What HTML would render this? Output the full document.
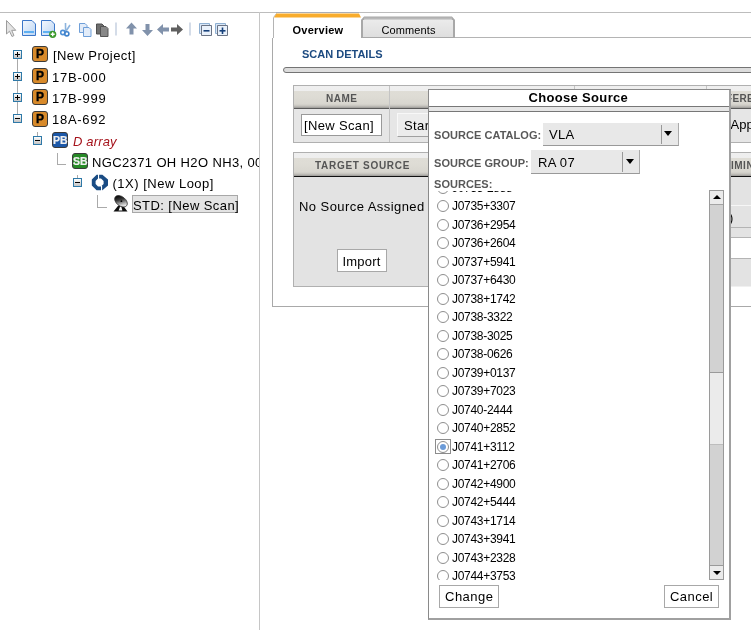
<!DOCTYPE html>
<html><head><meta charset="utf-8">
<style>
*{box-sizing:border-box;margin:0;padding:0}
html,body{width:751px;height:630px;overflow:hidden;background:#fff;font-family:"Liberation Sans",sans-serif;color:#000}
#root{position:absolute;left:0;top:0;width:751px;height:630px;will-change:transform}
.a{position:absolute}
.t{position:absolute;font-size:13px;line-height:15px;white-space:nowrap}
.exp{position:absolute;width:9px;height:9px;border:1px solid #2e79a8;background:linear-gradient(#fdfdfd,#c4c4c4)}
.exp:before{content:"";position:absolute;left:1px;top:3px;width:5px;height:1px;background:#000}
.exp.p:after{content:"";position:absolute;left:3px;top:1px;width:1px;height:5px;background:#000}
.ic{position:absolute;width:16px;height:16px;border:1px solid #3a3a3a;border-radius:3px;font-weight:bold;color:#000;text-align:center;font-size:12px;line-height:15px;-webkit-text-stroke:0.35px currentColor}
.hdr{position:absolute;background:linear-gradient(to top,#9a9996 0,#c4c2bc 2px,#d8d6cf 4px,#dedcd5 12px,#dfddd6 calc(100% - 5px),#eeeeee calc(100% - 5px),#efefef 100%);border-bottom:1px solid #5a5a5a}
.ht{position:absolute;color:#555;font-weight:bold;font-size:10px;line-height:12px;white-space:nowrap;letter-spacing:0.1px}
.lbl{position:absolute;color:#585858;font-weight:bold;font-size:11px;line-height:13px;letter-spacing:0.05px;white-space:nowrap}
.rad{position:absolute;width:12px;height:12px;border:1px solid #8e8e8e;border-radius:50%;background:#fff}
.it{position:absolute;font-size:12px;line-height:13px;white-space:nowrap;letter-spacing:-0.3px}
.hl{position:absolute;height:1px}
.vl{position:absolute;width:1px}
</style></head><body><div id="root">
<!-- top line -->
<div class="hl" style="left:0;top:12px;width:751px;background:#bdbdbd"></div>
<!-- left panel border -->
<div class="vl" style="left:259px;top:12px;height:618px;background:#c6c6c6"></div>

<!-- toolbar icons -->
<svg class="a" style="left:0;top:16px" width="240" height="24" viewBox="0 0 240 24">
 <defs>
  <linearGradient id="pg" x1="0" y1="0" x2="1" y2="1"><stop offset="0" stop-color="#f4f8fe"/><stop offset="1" stop-color="#bcd6f4"/></linearGradient>
 </defs>
 <path d="M6.5 4.5 L6.5 18 L9.5 15.2 L12 20.5 L14 19.5 L11.7 14.3 L15.8 14.3 Z" fill="#e4e4e4" stroke="#9c9c9c" stroke-width="1"/>
 <path d="M22.5 4.5 H32 L35.5 8 V19.5 H22.5 Z" fill="url(#pg)" stroke="#3b76c8" stroke-width="1"/>
 <rect x="24" y="15" width="10" height="2" fill="#5fb0f2"/>
 <path d="M41.5 4.5 H51 L54.5 8 V19.5 H41.5 Z" fill="url(#pg)" stroke="#3b76c8" stroke-width="1"/>
 <rect x="43" y="15" width="8" height="2" fill="#5fb0f2"/>
 <circle cx="52.7" cy="18.3" r="3.6" fill="#3d9a2c"/>
 <path d="M50.7 18.3 H54.7 M52.7 16.3 V20.3" stroke="#fff" stroke-width="1.4"/>
 <path d="M65.5 7 L65.6 15.5 M70 9 L65.8 15.5" stroke="#8db4de" stroke-width="1.6"/>
 <circle cx="62.8" cy="16.5" r="2.1" fill="none" stroke="#4d8fd6" stroke-width="1.6"/>
 <circle cx="66.8" cy="17.8" r="2.1" fill="none" stroke="#3f82cc" stroke-width="1.6"/>
 <path d="M79.5 7.5 H85 L87 9.5 V16.5 H79.5 Z" fill="#e2ecf9" stroke="#6f9fd8"/>
 <path d="M83.5 11.5 H89 L91 13.5 V20.5 H83.5 Z" fill="#e2ecf9" stroke="#6f9fd8"/>
 <path d="M96.5 8 H102 L104 10 V18 H96.5 Z" fill="#6e6e6e" stroke="#4e4e4e"/>
 <path d="M100.5 10.5 H106 L108 12.5 V20.5 H100.5 Z" fill="#888" stroke="#555"/>
 <rect x="115.5" y="6.5" width="1" height="13" fill="#a9b9d2"/>
 <path d="M131.5 6.5 L137 12.5 H133.5 V18.5 H129.5 V12.5 H126 Z" fill="#8192ab"/>
 <path d="M147.5 20 L153 14 H149.5 V8 H145.5 V14 H142 Z" fill="#8192ab"/>
 <path d="M157 13.5 L163 8 V11.5 H169 V15.5 H163 V19 Z" fill="#8192ab"/>
 <path d="M183 13.5 L177 8 V11.5 H171 V15.5 H177 V19 Z" fill="#606060"/>
 <rect x="189.5" y="6.5" width="1" height="13" fill="#a9b9d2"/>
 <path d="M199.5 7.5 H209.5 V17.5 H199.5 Z" fill="#d8e6f7" stroke="#8fb0d2"/>
 <path d="M201.5 9.5 H211.5 V19.5 H201.5 Z" fill="#e9f1fb" stroke="#6a7384"/>
 <rect x="203.5" y="14" width="6" height="1.6" fill="#16407a"/>
 <path d="M215.5 7.5 H225.5 V17.5 H215.5 Z" fill="#d8e6f7" stroke="#8fb0d2"/>
 <path d="M217.5 9.5 H227.5 V19.5 H217.5 Z" fill="#e9f1fb" stroke="#6a7384"/>
 <rect x="219.5" y="14" width="6" height="1.6" fill="#16407a"/>
 <rect x="221.7" y="11.5" width="1.6" height="6.5" fill="#16407a"/>
</svg>

<!-- tree lines -->
<div class="vl" style="left:17px;top:59px;height:56px;background:#aaa"></div>
<div class="vl" style="left:37px;top:132px;height:4px;background:#aaa"></div>
<div class="vl" style="left:57px;top:153px;height:11px;background:#aaa"></div>
<div class="hl" style="left:57px;top:164px;width:9px;background:#aaa"></div>
<div class="vl" style="left:77px;top:175px;height:4px;background:#aaa"></div>
<div class="vl" style="left:97px;top:195px;height:12px;background:#aaa"></div>
<div class="hl" style="left:97px;top:207px;width:10px;background:#aaa"></div>

<div class="exp p" style="left:13px;top:50px"></div>
<div class="exp p" style="left:13px;top:72px"></div>
<div class="exp p" style="left:13px;top:93px"></div>
<div class="exp" style="left:13px;top:114px"></div>
<div class="exp" style="left:33px;top:136px"></div>
<div class="exp" style="left:73px;top:178px"></div>

<div class="ic" style="left:32px;top:46px;background:#d88a2a">P</div>
<div class="ic" style="left:32px;top:68px;background:#d88a2a">P</div>
<div class="ic" style="left:32px;top:89px;background:#d88a2a">P</div>
<div class="ic" style="left:32px;top:111px;background:#d88a2a">P</div>
<div class="ic" style="left:52px;top:132px;background:#1c58a8;color:#f0f0f0;font-size:10.5px;line-height:15px;letter-spacing:0px;-webkit-text-stroke:0.2px #f0f0f0">PB</div>
<div class="ic" style="left:72px;top:153px;background:#278a26;color:#f0f0f0;font-size:10.5px;line-height:14px;letter-spacing:0.1px;-webkit-text-stroke:0.2px #f0f0f0">SB</div>
<svg class="a" style="left:91px;top:174px" width="18" height="17" viewBox="0 0 18 17">
 <path fill-rule="evenodd" fill="#1a4c84" d="M5.6 0.8 H11.4 L17 5.6 V11.4 L11.4 16.2 H5.6 L0.8 11.4 V5.6 Z M7 4.6 H10 L12.6 7 V10 L10 12.4 H7 L4.6 10 V7 Z"/>
 <rect x="7" y="0" width="1.1" height="5" fill="#fff"/>
 <rect x="10" y="12" width="1.1" height="5" fill="#fff"/>
</svg>
<svg class="a" style="left:112px;top:195px" width="17" height="18" viewBox="0 0 17 18">
 <defs><linearGradient id="dg" x1="0.1" y1="0.3" x2="0.9" y2="0.7"><stop offset="0" stop-color="#0a0a0a"/><stop offset="0.35" stop-color="#3a3a3a"/><stop offset="0.75" stop-color="#b8b8b8"/><stop offset="1" stop-color="#f4f4f4"/></linearGradient></defs>
 <path d="M6.3 10.5 L1.5 16.6 H15.5 L11 10.5 Z" fill="#0e0e0e"/>
 <path d="M6.6 15.6 L8.1 11.6 H9.3 L10.3 15.6 Z" fill="#fff"/>
 <ellipse cx="9" cy="6.3" rx="7.2" ry="4.6" transform="rotate(38 9 6.3)" fill="url(#dg)" stroke="#2a2a2a" stroke-width="0.7"/>
 <circle cx="9.4" cy="6.2" r="0.9" fill="#000"/>
</svg>

<div class="t" style="left:53px;top:48px;letter-spacing:0.42px">[New Project]</div>
<div class="t" style="left:52px;top:70px;letter-spacing:0.75px">17B-000</div>
<div class="t" style="left:52px;top:91px;letter-spacing:0.75px">17B-999</div>
<div class="t" style="left:52px;top:112px;letter-spacing:0.72px">18A-692</div>
<div class="t" style="left:73px;top:134px;color:#a5121b;font-style:italic;letter-spacing:0.15px">D array</div>
<div class="a" style="left:92px;top:155px;width:167px;height:16px;overflow:hidden"><div class="t" style="left:0;top:0;letter-spacing:0.37px">NGC2371 OH H2O NH3, 00</div></div>
<div class="t" style="left:112.5px;top:176px;letter-spacing:0.5px">(1X) [New Loop]</div>
<div class="a" style="left:132px;top:195px;width:106px;height:18px;background:#e3e3e3;border:1px solid #a8a8a8"></div>
<div class="t" style="left:133px;top:198px;letter-spacing:0.43px">STD: [New Scan]</div>

<!-- tabs -->
<svg class="a" style="left:270px;top:10px" width="481" height="30" viewBox="0 0 481 30">
 <!-- overview tab -->
 <path d="M3 28 V7 L6 3 H89 L92 7" fill="#fff"/>
 <path d="M3.5 28 V7.5 L6.5 3.5" fill="none" stroke="#b4b4b4" stroke-width="1"/>
 <path d="M6 2.5 H89" stroke="#a9aeb6" stroke-width="1"/>
 <path d="M4 7.5 L6.5 3.5 H89 L91 7.5 Z" fill="#f8ac2c"/>
 <!-- comments tab -->
 <path d="M91 27.5 V10 L94 7 H182 L185 10 V27.5 Z" fill="#e6e6e6"/>
 <path d="M92 27.5 V10.3 L94.5 7.5 H181.5 L184 10.3 V27.5" fill="none" stroke="#a8a8a8" stroke-width="2"/>
 <path d="M94 8.5 H182" stroke="#b9b9b9" stroke-width="2"/>
 <path d="M185 27.5 H481" stroke="#b4b4b4" stroke-width="1"/>
 <path d="M91 27.5 H185" stroke="#a8a8a8" stroke-width="1"/>
</svg>
<div class="a" style="left:363px;top:20px;width:90px;height:17px;background:linear-gradient(#ebebeb,#dedede)"></div>
<div class="a" style="left:292.5px;top:24px;font-size:11px;font-weight:bold;line-height:13px;letter-spacing:0.25px">Overview</div>
<div class="a" style="left:381.5px;top:24px;font-size:11px;line-height:13px;letter-spacing:0.1px">Comments</div>
<div class="vl" style="left:272px;top:38px;height:268px;background:#a9a9a9"></div>
<div class="hl" style="left:272px;top:306px;width:479px;background:#a9a9a9"></div>

<div class="a" style="left:302px;top:48px;font-size:11px;font-weight:bold;color:#1c4a80;line-height:13px;letter-spacing:0px">SCAN DETAILS</div>
<div class="a" style="left:283px;top:67px;width:480px;height:6px;border:1px solid #747474;border-radius:3px;background:#dcdcdc"></div>

<!-- table 1 -->
<div class="a" style="left:293px;top:85px;width:458px;height:58px;background:#e6e6e6;border:1px solid #b0b0b0;border-right:none"></div>
<div class="hdr" style="left:294px;top:86px;width:457px;height:23px"></div>
<div class="vl" style="left:389px;top:86px;height:56px;background:#c4c4c4"></div>
<div class="vl" style="left:574px;top:86px;height:22px;background:#c4c4c4"></div>
<div class="vl" style="left:706px;top:86px;height:22px;background:#c4c4c4"></div>
<div class="ht" style="left:326px;top:93px;letter-spacing:0.5px">NAME</div>
<div class="ht" style="left:726px;top:93px;letter-spacing:0.3px">FERENCE</div>
<div class="a" style="left:301px;top:114px;width:81px;height:22px;background:#fff;border:1px solid #999"></div>
<div class="t" style="left:304px;top:118px;letter-spacing:0.35px">[New Scan]</div>
<div class="a" style="left:397px;top:113px;width:60px;height:24px;background:#ececec;border:1px solid #f8f8f8;border-bottom:1px solid #a0a0a0"></div>
<div class="t" style="left:404px;top:118px;letter-spacing:0.4px">Start</div>
<div class="t" style="left:730.5px;top:117px;letter-spacing:0px">Apply</div>

<!-- table 2 -->
<div class="a" style="left:293px;top:152px;width:458px;height:135px;background:#e3e3e3;border:1px solid #b0b0b0;border-right:none"></div>
<div class="hdr" style="left:294px;top:153px;width:457px;height:24px;border-bottom:1px solid #111"></div>
<div class="ht" style="left:315px;top:160px;letter-spacing:0.7px">TARGET SOURCE</div>
<div class="ht" style="left:731px;top:160px;letter-spacing:0.5px">IMING</div>
<div class="t" style="left:299px;top:199px;letter-spacing:0.44px">No Source Assigned</div>
<div class="a" style="left:337px;top:249px;width:50px;height:23px;background:#fff;border:1px solid #a8a8a8"></div>
<div class="t" style="left:342.5px;top:254px;letter-spacing:0.2px">Import</div>
<div class="hl" style="left:729px;top:205px;width:22px;background:#f6f6f6"></div>
<div class="hl" style="left:729px;top:227px;width:22px;background:#b4b4b4"></div>
<div class="a" style="left:729px;top:237px;width:22px;height:22px;background:#fff;border-top:1px solid #b4b4b4;border-bottom:1px solid #b4b4b4"></div>
<div class="hl" style="left:729px;top:286px;width:22px;background:#f0f0f0"></div>
<div class="t" style="left:729px;top:210px">)</div>

<!-- dialog -->
<div class="a" style="left:428px;top:89px;width:303px;height:531px;background:#fff;border:1px solid #8a8a8a;border-right:2px solid #a0a0a0;border-bottom:2px solid #a0a0a0"></div>
<div class="a" style="left:429px;top:106px;width:300px;height:6px;background:#e6e6e6;border-top:1px solid #777;border-bottom:1px solid #777"></div>
<div class="a" style="left:528.5px;top:90px;font-size:13px;font-weight:bold;line-height:15px;letter-spacing:0.33px;white-space:nowrap">Choose Source</div>

<div class="lbl" style="left:434px;top:129px">SOURCE CATALOG:</div>
<div class="a" style="left:543px;top:123px;width:136px;height:23px;background:#e8e8e8;border-bottom:1px solid #999;border-right:1px solid #aaa"></div>
<div class="vl" style="left:661px;top:125px;height:19px;background:#999"></div>
<div class="a" style="left:664px;top:131px;width:0;height:0;border-left:4.5px solid transparent;border-right:4.5px solid transparent;border-top:5px solid #000"></div>
<div class="t" style="left:549px;top:127px;letter-spacing:0.3px">VLA</div>

<div class="lbl" style="left:434px;top:157px">SOURCE GROUP:</div>
<div class="a" style="left:531px;top:150px;width:109px;height:24px;background:#e8e8e8;border-bottom:1px solid #999;border-right:1px solid #aaa"></div>
<div class="vl" style="left:622px;top:152px;height:20px;background:#999"></div>
<div class="a" style="left:625.5px;top:159px;width:0;height:0;border-left:4.5px solid transparent;border-right:4.5px solid transparent;border-top:5px solid #000"></div>
<div class="t" style="left:538px;top:155px;letter-spacing:0.3px">RA 07</div>

<div class="lbl" style="left:434px;top:178px">SOURCES:</div>

<!-- list -->
<div class="a" style="left:429px;top:191px;width:280px;height:389px;overflow:hidden">
<div class="rad" style="left:8px;top:-9.5px"></div>
<div class="it" style="left:23px;top:-9.2px">J0735-2888</div>
<div class="rad" style="left:8px;top:9.0px"></div>
<div class="it" style="left:23px;top:9.3px">J0735+3307</div>
<div class="rad" style="left:8px;top:27.5px"></div>
<div class="it" style="left:23px;top:27.8px">J0736+2954</div>
<div class="rad" style="left:8px;top:46.0px"></div>
<div class="it" style="left:23px;top:46.3px">J0736+2604</div>
<div class="rad" style="left:8px;top:64.5px"></div>
<div class="it" style="left:23px;top:64.8px">J0737+5941</div>
<div class="rad" style="left:8px;top:83.0px"></div>
<div class="it" style="left:23px;top:83.3px">J0737+6430</div>
<div class="rad" style="left:8px;top:101.5px"></div>
<div class="it" style="left:23px;top:101.8px">J0738+1742</div>
<div class="rad" style="left:8px;top:120.0px"></div>
<div class="it" style="left:23px;top:120.3px">J0738-3322</div>
<div class="rad" style="left:8px;top:138.5px"></div>
<div class="it" style="left:23px;top:138.8px">J0738-3025</div>
<div class="rad" style="left:8px;top:157.0px"></div>
<div class="it" style="left:23px;top:157.3px">J0738-0626</div>
<div class="rad" style="left:8px;top:175.5px"></div>
<div class="it" style="left:23px;top:175.8px">J0739+0137</div>
<div class="rad" style="left:8px;top:194.0px"></div>
<div class="it" style="left:23px;top:194.3px">J0739+7023</div>
<div class="rad" style="left:8px;top:212.5px"></div>
<div class="it" style="left:23px;top:212.8px">J0740-2444</div>
<div class="rad" style="left:8px;top:231.0px"></div>
<div class="it" style="left:23px;top:231.3px">J0740+2852</div>
<div class="a" style="left:6px;top:248.0px;width:16px;height:15px;border:1px solid #8c8c8c"></div>
<div class="rad" style="left:8px;top:249.5px"><div style="position:absolute;left:2px;top:2px;width:6px;height:6px;border-radius:50%;background:#6b9bd8"></div></div>
<div class="it" style="left:23px;top:249.8px">J0741+3112</div>
<div class="rad" style="left:8px;top:268.0px"></div>
<div class="it" style="left:23px;top:268.3px">J0741+2706</div>
<div class="rad" style="left:8px;top:286.5px"></div>
<div class="it" style="left:23px;top:286.8px">J0742+4900</div>
<div class="rad" style="left:8px;top:305.0px"></div>
<div class="it" style="left:23px;top:305.3px">J0742+5444</div>
<div class="rad" style="left:8px;top:323.5px"></div>
<div class="it" style="left:23px;top:323.8px">J0743+1714</div>
<div class="rad" style="left:8px;top:342.0px"></div>
<div class="it" style="left:23px;top:342.3px">J0743+3941</div>
<div class="rad" style="left:8px;top:360.5px"></div>
<div class="it" style="left:23px;top:360.8px">J0743+2328</div>
<div class="rad" style="left:8px;top:379.0px"></div>
<div class="it" style="left:23px;top:379.3px">J0744+3753</div>
</div>
<!-- scrollbar -->
<div class="a" style="left:709px;top:190px;width:15px;height:390px;background:#d2d2d2;border:1px solid #9a9a9a"></div>
<div class="a" style="left:710px;top:191px;width:13px;height:14px;background:#ebebeb;border-bottom:1px solid #a4a4a4"></div>
<div class="a" style="left:712.5px;top:195px;width:0;height:0;border-left:4px solid transparent;border-right:4px solid transparent;border-bottom:4.5px solid #000"></div>
<div class="a" style="left:710px;top:372px;width:13px;height:73px;background:#ebebeb;border-top:1px solid #9a9a9a;border-bottom:1px solid #bdbdbd"></div>
<div class="a" style="left:710px;top:565px;width:13px;height:14px;background:#ebebeb;border-top:1px solid #9a9a9a"></div>
<div class="a" style="left:712.5px;top:570.5px;width:0;height:0;border-left:4px solid transparent;border-right:4px solid transparent;border-top:4.5px solid #000"></div>

<div class="a" style="left:439px;top:585px;width:60px;height:23px;background:#fff;border:1px solid #a8a8a8"></div>
<div class="t" style="left:445px;top:589px;letter-spacing:0.5px">Change</div>
<div class="a" style="left:664px;top:585px;width:55px;height:23px;background:#fff;border:1px solid #a8a8a8"></div>
<div class="t" style="left:670px;top:589px;letter-spacing:0.45px">Cancel</div>
</div></body></html>
